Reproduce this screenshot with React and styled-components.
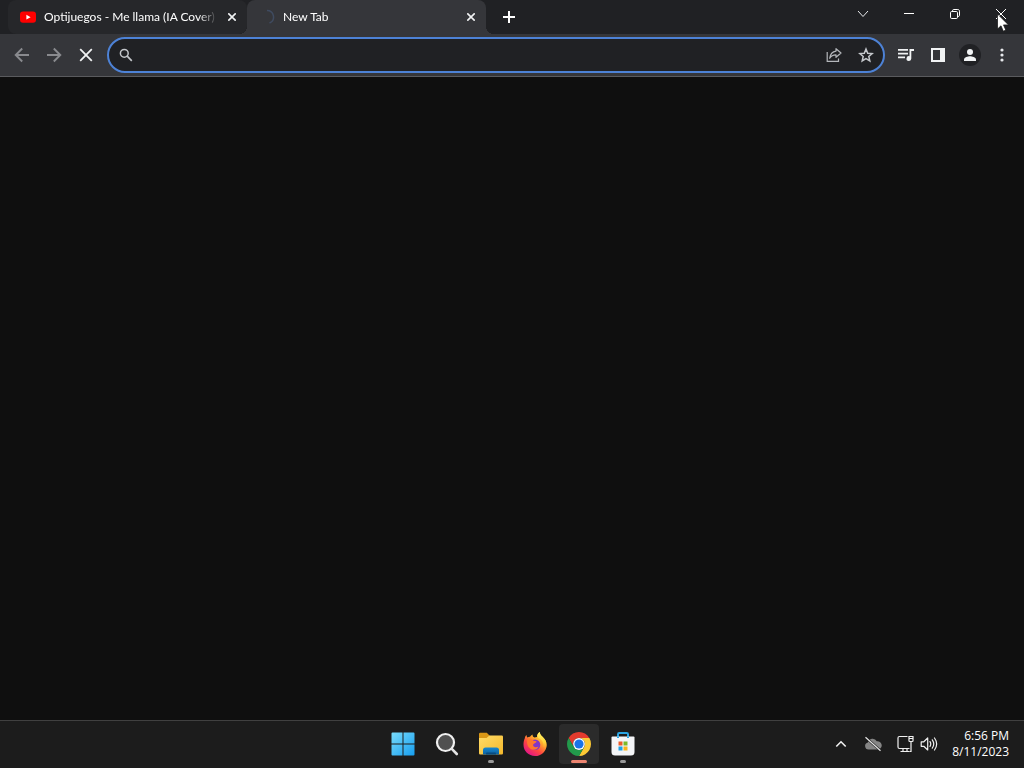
import React, { useState } from "react";
import styled, { createGlobalStyle } from "styled-components";

const App = () => {
  const [query, setQuery] = useState("");

  return (
    <Desktop>
      <GlobalStyle />
      <TabStrip>
        <Tab>
          <YoutubeIcon />
          <TabTitle>Optijuegos - Me llama (IA Cover)</TabTitle>
          <TabClose aria-label="Close tab">
            <CrossIcon />
          </TabClose>
        </Tab>
        <Tab $active>
          <SpinnerIcon />
          <TabTitle>New Tab</TabTitle>
          <TabClose aria-label="Close tab">
            <CrossIcon />
          </TabClose>
        </Tab>
        <NewTabButton aria-label="New tab">
          <svg width="12" height="12" viewBox="0 0 12 12" stroke="#fff" strokeWidth="2">
            <path d="M6 0v12M0 6h12" />
          </svg>
        </NewTabButton>
        <WindowControls>
          <WindowButton aria-label="Search tabs">
            <svg width="12" height="12" viewBox="0 0 12 12" fill="none" stroke="#e8eaed">
              <path d="M1 3l5 5.500L11 3" />
            </svg>
          </WindowButton>
          <WindowButton aria-label="Minimize">
            <svg width="10" height="10" viewBox="0 0 10 10" stroke="#fff">
              <path d="M0 4.500h10" />
            </svg>
          </WindowButton>
          <WindowButton aria-label="Restore">
            <svg width="10" height="10" viewBox="0 0 10 10" fill="none" stroke="#fff">
              <rect x="0.5" y="2.5" width="7" height="7" rx="1.2" />
              <path d="M2.5 2.5v-.7c0-.8.5-1.3 1.300-1.300h4c1 0 1.700.7 1.700 1.700v4c0 .8-.5 1.300-1.300 1.300h-.7" />
            </svg>
          </WindowButton>
          <WindowButton aria-label="Close">
            <svg width="10" height="10" viewBox="0 0 10 10" stroke="#fff">
              <path d="M0 0l10 10M10 0L0 10" />
            </svg>
            <Pointer width="12" height="19" viewBox="0 0 12 19">
              <path
                d="M.5 1v15l3.500-3.200 2.300 5.400 2.500-1.100-2.300-5.200h5z"
                fill="#fff"
                stroke="#111"
                strokeWidth="0.7"
              />
            </Pointer>
          </WindowButton>
        </WindowControls>
      </TabStrip>

      <Toolbar>
        <ToolButton aria-label="Back" disabled>
          <svg width="16" height="16" viewBox="0 0 16 16" fill="none" stroke="#898a8e" strokeWidth="1.900">
            <path d="M15 8H2M8.200 1.500L1.700 8l6.500 6.500" />
          </svg>
        </ToolButton>
        <ToolButton aria-label="Forward" disabled>
          <svg width="16" height="16" viewBox="0 0 16 16" fill="none" stroke="#898a8e" strokeWidth="1.900">
            <path d="M1 8h13M7.800 1.500L14.300 8l-6.500 6.500" />
          </svg>
        </ToolButton>
        <ToolButton aria-label="Stop loading">
          <svg width="14" height="14" viewBox="0 0 14 14" stroke="#f1f3f4" strokeWidth="1.800">
            <path d="M1.200 1.200l11.600 11.600M12.800 1.200L1.200 12.800" />
          </svg>
        </ToolButton>
        <Omnibox>
          <svg width="16" height="16" viewBox="0 0 16 16" fill="none" stroke="#c4c7cb" strokeWidth="1.500">
            <circle cx="6.300" cy="6.300" r="3.900" />
            <path d="M9.200 9.200l4.600 4.600" strokeWidth="1.700" />
          </svg>
          <OmniboxInput
            aria-label="Address and search bar"
            value={query}
            onChange={(e) => setQuery(e.target.value)}
          />
          <ToolButton aria-label="Share this page">
            <svg width="16" height="16" viewBox="0 0 16 16" fill="none" stroke="#b4b7bb" strokeWidth="1.200">
              <path d="M1.200 5v9.300h11.300V11.500" />
              <path d="M10 1.700l5 4.300-5 4.300V7.900C7 7.900 5 8.900 3.700 11.300 4.200 7.500 6.200 4.600 10 4.100z" strokeLinejoin="round" />
            </svg>
          </ToolButton>
          <ToolButton aria-label="Bookmark this tab">
            <svg width="16" height="16" viewBox="0 0 16 16" fill="none" stroke="#c4c7cb" strokeWidth="1.500">
              <path d="M8 2l1.700 4.200 4.500.4-3.400 2.900 1 4.400L8 11.600l-3.800 2.300 1-4.400-3.400-2.900 4.500-.4z" />
            </svg>
          </ToolButton>
        </Omnibox>
        <ToolButton aria-label="Media controls">
          <svg width="16" height="14" viewBox="0 0 16 14" fill="#f1f3f4">
            <path d="M0 1h10v1.700H0zM0 4.800h10v1.700H0zM0 8.600h7v1.700H0z" />
            <path d="M11.500 1H16v2h-2.700v7.500a2.400 2.400 0 1 1-1.800-2.300z" />
          </svg>
        </ToolButton>
        <ToolButton aria-label="Side panel">
          <svg width="14" height="14" viewBox="0 0 14 14">
            <path fillRule="evenodd" fill="#f1f3f4" d="M0 0h14v14H0zM2 2v10h7V2z" />
          </svg>
        </ToolButton>
        <ToolButton aria-label="Profile">
          <svg width="22" height="22" viewBox="0 0 22 22">
            <circle cx="11" cy="11" r="11" fill="#202124" />
            <g fill="#f1f3f4">
              <circle cx="11" cy="8" r="3" />
              <path d="M5 17v-1.500c0-2.200 4-3.300 6-3.300s6 1.100 6 3.300V17z" />
            </g>
          </svg>
        </ToolButton>
        <ToolButton aria-label="Menu">
          <svg width="4" height="14" viewBox="0 0 4 14" fill="#e8eaed">
            <circle cx="2" cy="2" r="1.600" />
            <circle cx="2" cy="7" r="1.600" />
            <circle cx="2" cy="12" r="1.600" />
          </svg>
        </ToolButton>
      </Toolbar>

      <Page />

      <Taskbar>
        <TaskbarApps>
          <AppButton aria-label="Start">
            <StartIcon />
          </AppButton>
          <AppButton aria-label="Search">
            <svg width="24" height="24" viewBox="0 0 24 24" fill="none">
              <circle cx="10.500" cy="10.500" r="8.500" fill="#505050" stroke="#f0f0f0" strokeWidth="2.200" />
              <path d="M16.800 16.800l5 5.200" stroke="#e4e4e4" strokeWidth="2.600" strokeLinecap="round" />
            </svg>
          </AppButton>
          <AppButton aria-label="File Explorer" $mark="idle">
            <ExplorerIcon />
          </AppButton>
          <AppButton aria-label="Firefox">
            <FirefoxIcon />
          </AppButton>
          <AppButton aria-label="Google Chrome" $mark="active">
            <ChromeIcon />
          </AppButton>
          <AppButton aria-label="Microsoft Store" $mark="idle">
            <StoreIcon />
          </AppButton>
        </TaskbarApps>
        <Tray>
          <TrayButton aria-label="Show hidden icons">
            <svg width="12" height="8" viewBox="0 0 12 8" fill="none" stroke="#f0f0f0" strokeWidth="1.600">
              <path d="M1.300 6.500L6 1.800l4.700 4.700" />
            </svg>
          </TrayButton>
          <TrayButton aria-label="OneDrive">
            <svg width="18" height="16" viewBox="0 0 18 16">
              <path
                d="M4.500 13.500a3.600 3.600 0 0 1-.6-7.100A4.800 4.800 0 0 1 12.800 5.200a4.200 4.200 0 0 1 1.400 8.300z"
                fill="#858585"
              />
              <path d="M1.500 1.300l15 13.400" stroke="#1c1c1c" strokeWidth="2.400" />
              <path d="M1.500 1.300l15 13.400" stroke="#e6e6e6" strokeWidth="1.200" />
            </svg>
          </TrayButton>
          <TrayButton aria-label="Network and volume" $wide>
            <svg width="17" height="18" viewBox="0 0 17 18" fill="none" stroke="#f0f0f0" strokeWidth="1.200">
              <path d="M10.500 1.500h-8q-1.500 0-1.500 1.500v9q0 1.500 1.500 1.500h10" />
              <path d="M6 13.500v3M10 13.500v3M3.500 16.500h9" />
              <path d="M12 1.500h4v4.200q0 .8-.8.8h-2.400q-.8 0-.8-.8zM12 3.500h4M14 6.500v10h-1.500" />
            </svg>
            <svg width="18" height="16" viewBox="0 0 18 16" fill="none" stroke="#f0f0f0" strokeWidth="1.200">
              <path d="M1.200 5.800h2.600L7.700 2v12l-3.900-3.700H1.200z" strokeLinejoin="round" />
              <path d="M10 5.600q1.500 2.400 0 4.800M12.300 3.800q2.900 4.200 0 8.400M14.500 2q4.300 6 0 12" strokeLinecap="round" />
            </svg>
          </TrayButton>
          <Clock>
            <span>6:56 PM</span>
            <span>8/11/2023</span>
          </Clock>
        </Tray>
      </Taskbar>
    </Desktop>
  );
};

const YoutubeIcon = () => (
  <svg width="16" height="16" viewBox="0 0 16 16">
    <rect y="2.500" width="16" height="11.300" rx="3" fill="#f00" />
    <path d="M6.400 5.700v4.900l4.200-2.450z" fill="#fff" />
  </svg>
);

const SpinnerIcon = () => (
  <svg width="16" height="16" viewBox="0 0 16 16" fill="none" stroke="#3f4b60" strokeWidth="1.500">
    <path d="M8 1.500a6.500 6.500 0 0 1 2.500 12.500" />
  </svg>
);

const CrossIcon = () => (
  <svg width="8" height="8" viewBox="0 0 8 8" stroke="#f1f3f4" strokeWidth="1.600">
    <path d="M.3.3l7.400 7.400M7.700.3L.3 7.700" />
  </svg>
);

const StartIcon = () => (
  <svg width="24" height="24" viewBox="0 0 24 24">
    <defs>
      <linearGradient id="start" x1="0" y1="0" x2="24" y2="24" gradientUnits="userSpaceOnUse">
        <stop stopColor="#7bdcfa" />
        <stop offset="1" stopColor="#149df0" />
      </linearGradient>
    </defs>
    <path
      fill="url(#start)"
      d="M1.500.5h10v11H.5v-10q0-1 1-1zM12.500.5h10q1 0 1 1v10h-11zM.5 12.500h11v11h-10q-1 0-1-1zM12.500 12.500h11v10q0 1-1 1h-10z"
    />
  </svg>
);

const ExplorerIcon = () => (
  <svg width="24" height="24" viewBox="0 0 24 24">
    <defs>
      <linearGradient id="folder" x1="0" y1="0" x2="1" y2="1">
        <stop stopColor="#ffdc69" />
        <stop offset="1" stopColor="#f4b82b" />
      </linearGradient>
      <linearGradient id="dock" x1="0" y1="0" x2="0" y2="1">
        <stop stopColor="#1787cf" />
        <stop offset="1" stopColor="#0c619f" />
      </linearGradient>
    </defs>
    <path d="M0 2q0-1.200 1.200-1.200h6.600L10.500 3.500v3.500H0z" fill="#d99716" />
    <path d="M0 6h7.500l3-2.500h12.300Q24 3.500 24 4.700v16.600q0 1.200-1.200 1.200H1.200Q0 22.500 0 21.300z" fill="url(#folder)" />
    <path d="M4 22.500V18q0-2.500 2.500-2.500h11Q20 15.500 20 18v4.500z" fill="url(#dock)" />
    <path d="M7 22.500v-1q0-1 1-1h8q1 0 1 1v1z" fill="#084b80" />
  </svg>
);

const FirefoxIcon = () => (
  <svg width="24" height="24" viewBox="0 0 24 24">
    <defs>
      <linearGradient id="fox" x1="20" y1="2" x2="5" y2="22" gradientUnits="userSpaceOnUse">
        <stop stopColor="#fff044" />
        <stop offset="0.350" stopColor="#ffa42c" />
        <stop offset="0.650" stopColor="#ff483f" />
        <stop offset="1" stopColor="#e31587" />
      </linearGradient>
      <linearGradient id="flame" x1="0" y1="0" x2="0" y2="1">
        <stop stopColor="#fff36a" />
        <stop offset="0.600" stopColor="#ffd43a" />
        <stop offset="1" stopColor="#ff8c2f" />
      </linearGradient>
    </defs>
    <path
      d="M1.800 6.200C2 4.600 2.800 3.600 3.500 3c0 1 .3 1.700.8 2.400.8-.5 1.700-.7 2.700-.7C7.600 3.700 8.500 3 9.600 2.500c-.2 1.500.5 2.600 1.900 3.100L14 5C13.700 3 14.700 1 16.800 0c.1 2.300 1.200 3.300 2.700 4.700 2.300 2.100 4 4.400 4 8.200C23.500 19.200 18.400 24 12 24S.5 19.200.5 12.800c0-2.400.4-4.700 1.300-6.600z"
      fill="url(#fox)"
    />
    <circle cx="12" cy="12.700" r="5.300" fill="#8137c6" />
    <path d="M4.300 7.500c2-.9 4.700-.4 6.300 1.200l2.900.6c-.2 1.400-1.400 1.900-2.600 2.500-1 .5-1 1.700-.4 2.400 1.600 1.700 3.800.9 5 .3-1 2.700-4 4.300-7.200 2.700-3.500-1.700-4.900-5.900-4-9.700z" fill="#ff772d" />
    <path d="M16.800 0c.1 2.300 1.200 3.300 2.700 4.700 2.300 2.100 4 4.400 4 8.200 0 1.500-.3 2.900-.9 4.200-.6-1.200-1.300-2-2.300-2.700.5-3.900-1.300-6.800-4.800-8.100C14.100 4.500 14.300 1.500 16.800 0z" fill="url(#flame)" />
  </svg>
);

const ChromeIcon = () => (
  <svg width="24" height="24" viewBox="0 0 24 24">
    <path d="M1.610 6A12 12 0 0 1 22.390 6H12a6 6 0 0 0-5.200 9z" fill="#e33b2e" />
    <path d="M22.390 6A12 12 0 0 1 12 24l5.200-9A6 6 0 0 0 12 6z" fill="#fcc934" />
    <path d="M12 24A12 12 0 0 1 1.610 6L6.800 15a6 6 0 0 0 10.400 0z" fill="#229a4b" />
    <circle cx="12" cy="12" r="5.900" fill="#fff" />
    <circle cx="12" cy="12" r="4.600" fill="#1a73e8" />
  </svg>
);

const StoreIcon = () => (
  <svg width="24" height="24" viewBox="0 0 24 24">
    <path d="M7 5V2.300Q7 1 8.300 1h7.400Q17 1 17 2.300V5" fill="none" stroke="#2ba5e3" strokeWidth="2" />
    <path d="M.5 5.500q0-1 1-1h21q1 0 1 1V20q0 3.500-3.500 3.500H4Q.5 23.500.5 20z" fill="#f4f5f7" />
    <path d="M6 4.500h2V6H6zM16 4.500h2V6h-2z" fill="#2ba5e3" />
    <path d="M7.500 9.500h4v4h-4z" fill="#ec5a29" />
    <path d="M12.500 9.500h4v4h-4z" fill="#7cb928" />
    <path d="M7.500 14.500h4v4h-4z" fill="#1fa0e4" />
    <path d="M12.500 14.500h4v4h-4z" fill="#f9b51b" />
  </svg>
);

const GlobalStyle = createGlobalStyle`
  * {
    box-sizing: border-box;
  }
  body {
    margin: 0;
    background: #0f0f0f;
    font-family: "Open Sans", "Noto Sans", sans-serif;
    font-size: 12px;
    color: #fff;
  }
  svg {
    display: block;
    flex-shrink: 0;
  }
`;

const Desktop = styled.div`
  display: flex;
  flex-direction: column;
  height: 100vh;
  overflow: hidden;
`;

const PlainButton = styled.button`
  display: flex;
  align-items: center;
  justify-content: center;
  flex-shrink: 0;
  padding: 0;
  border: none;
  background: transparent;
  color: inherit;
  font: inherit;
`;

const TabStrip = styled.div`
  display: flex;
  align-items: center;
  height: 34px;
  padding-left: 8px;
  background: #202124;
`;

const Tab = styled.div`
  position: relative;
  display: flex;
  align-items: center;
  flex: 0 1 239px;
  min-width: 0;
  height: 34px;
  padding: 0 7px 0 12px;
  border-radius: ${(props) => (props.$active ? "8px 8px 0 0" : "8px")};
  background: ${(props) => (props.$active ? "#35363a" : "#26272a")};

  /* curved feet of the selected tab */
  &::before,
  &::after {
    content: "";
    display: ${(props) => (props.$active ? "block" : "none")};
    position: absolute;
    bottom: 0;
    width: 8px;
    height: 8px;
  }
  &::before {
    left: -8px;
    background: radial-gradient(circle at 0 0, transparent 8px, #35363a 8px);
  }
  &::after {
    right: -8px;
    background: radial-gradient(circle at 100% 0, transparent 8px, #35363a 8px);
  }
`;

const TabTitle = styled.span`
  flex: 1;
  min-width: 0;
  margin: 0 6px 0 8px;
  overflow: hidden;
  white-space: nowrap;
  font-family: Lato, "Open Sans", sans-serif;
  line-height: 18px;
  mask-image: linear-gradient(to right, #000 calc(100% - 20px), transparent);
`;

const TabClose = styled(PlainButton)`
  width: 16px;
  height: 16px;
`;

const NewTabButton = styled(PlainButton)`
  width: 28px;
  height: 28px;
  margin-left: 9px;
`;

const WindowControls = styled.div`
  display: flex;
  align-self: flex-start;
  margin-left: auto;
`;

const WindowButton = styled(PlainButton)`
  position: relative;
  width: 46px;
  height: 28px;
`;

const Pointer = styled.svg`
  position: absolute;
  top: 13px;
  left: 19px;
`;

const Toolbar = styled.div`
  display: flex;
  align-items: center;
  padding: 3px 6px;
  background: #35363a;
  border-bottom: 1px solid #5a5b5e;
`;

const ToolButton = styled(PlainButton)`
  width: 32px;
  height: 28px;
`;

const Omnibox = styled.div`
  display: flex;
  align-items: center;
  flex: 1;
  min-width: 0;
  height: 36px;
  margin: 0 5px;
  padding: 0 1px 0 9px;
  border: 2px solid #4d82d6;
  border-radius: 18px;
  background: #202124;
`;

const OmniboxInput = styled.input`
  flex: 1;
  min-width: 0;
  padding: 0 8px;
  border: none;
  outline: none;
  background: transparent;
  color: #e8eaed;
  font: inherit;
  font-size: 14px;
`;

const Page = styled.main`
  flex: 1;
  background: #0f0f0f;
`;

const Taskbar = styled.footer`
  display: grid;
  grid-template-columns: 1fr auto 1fr;
  align-items: center;
  height: 48px;
  padding-bottom: 1px;
  border-top: 1px solid #404040;
  background: #1c1c1c;
`;

const TaskbarApps = styled.div`
  grid-column: 2;
  display: flex;
  gap: 4px;
  padding-left: 1px;
`;

const AppButton = styled(PlainButton)`
  position: relative;
  width: 40px;
  height: 40px;
  border-radius: 4px;
  background: ${(props) => (props.$mark === "active" ? "#2b2b2b" : "transparent")};

  &::after {
    content: "";
    display: ${(props) => (props.$mark ? "block" : "none")};
    position: absolute;
    bottom: 1px;
    width: ${(props) => (props.$mark === "active" ? "16px" : "6px")};
    height: 3px;
    border-radius: 2px;
    background: ${(props) => (props.$mark === "active" ? "#ed8571" : "#9a9a9a")};
  }
`;

const Tray = styled.div`
  display: flex;
  align-items: center;
  justify-content: flex-end;
  padding-right: 15px;
`;

const TrayButton = styled(PlainButton)`
  gap: 6px;
  width: ${(props) => (props.$wide ? "56px" : "32px")};
  height: 40px;
`;

const Clock = styled.time`
  display: flex;
  flex-direction: column;
  align-items: flex-end;
  margin-left: 7px;
  line-height: 16px;
`;

export default App;
